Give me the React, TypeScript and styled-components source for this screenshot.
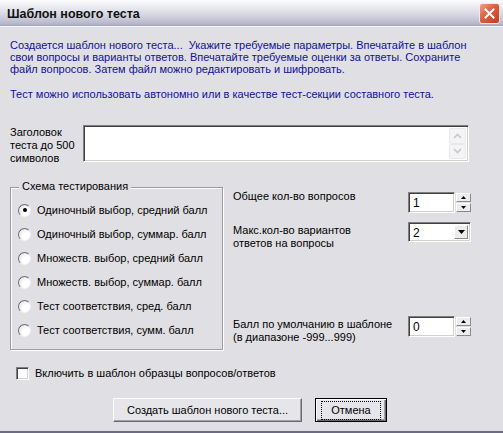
import * as React from 'react'
import styled, { createGlobalStyle } from 'styled-components'

const GlobalStyle = createGlobalStyle`
  html, body { margin: 0; padding: 0; background: #e0dfe3; }
  body { font-family: "Liberation Sans", Arial, sans-serif; font-size: 11px; color: #000; }
`

const Window = styled.div`
  width: 503px; height: 433px; display: flex; flex-direction: column; overflow: hidden;
`

const TitleBar = styled.div`
  height: 27px; flex: none; display: flex; align-items: center; justify-content: space-between;
  padding: 0 3px 0 7px; box-sizing: border-box;
  background: linear-gradient(#fdfdfe 0%, #ececf2 25%, #d4d4e0 60%, #b6b6ca 92%, #a2a2b8 100%);
  border-bottom: 1px solid #f4f4f8;
`

const Caption = styled.div`
  font: bold 12.5px "Liberation Sans", Arial, sans-serif; color: #111; padding-top: 2px;
`

const CloseBtn = styled.div`
  width: 21px; height: 21px; box-sizing: border-box; border-radius: 3px; border: 1px solid #f6e8e4;
  background: linear-gradient(135deg, #f0a28a 0%, #dc5e40 45%, #c43c22 100%);
  display: flex; align-items: center; justify-content: center;
`

const Body = styled.div`
  flex: 1; background: #e0dfe3; border-bottom: 2px solid #6c6b84; padding: 12px 0 0 10px;
  display: flex; flex-direction: column;
`

const Intro = styled.div`
  color: #10109c; line-height: 12px; white-space: nowrap;
`

const IntroPara = styled.p<{ gap?: number }>`
  margin: ${p => p.gap || 0}px 0 0 0;
`

const HeadingRow = styled.div`
  display: flex; margin-top: 25px;
`

const HeadingLabel = styled.div`
  width: 73px; line-height: 13px; margin-top: 1px;
`

const Sunken = styled.div`
  box-sizing: border-box; background: #fff;
  border: 1px solid; border-color: #7f7f7f #ffffff #ffffff #7f7f7f;
  box-shadow: inset 1px 1px 0 #404040, inset -1px -1px 0 #d4d0c8;
`

const TextBox = styled(Sunken)`
  width: 386px; height: 37px; display: flex; justify-content: flex-end; padding: 2px 2px;
`

const ScrollCol = styled.div`
  width: 17px; display: flex; flex-direction: column; gap: 0;
`

const ScrollBtn = styled.div`
  flex: 1; box-sizing: border-box; border: 1px solid #e8e8ec; border-radius: 2px;
  background: #f4f4f4; display: flex; align-items: center; justify-content: center;
`

const Middle = styled.div`
  display: flex; margin-top: 22px;
`

const Group = styled.div`
  position: relative; width: 213px; height: 163px; box-sizing: border-box;
  border: 1px solid #9d9da1; box-shadow: inset 1px 1px 0 #fff, 1px 1px 0 #fff;
  padding: 10px 0 0 7px;
`

const Legend = styled.span`
  position: absolute; top: -8px; left: 8px; padding: 0 3px; background: #e0dfe3; line-height: 13px;
`

const RadioRow = styled.label`
  display: flex; align-items: center; height: 24px; gap: 6px;
`

const RadioCircle = styled.span<{ checked?: boolean }>`
  width: 13px; height: 13px; box-sizing: border-box; border-radius: 50%; flex: none;
  border: 1px solid; border-color: #6e6e6e #f2f2f2 #f2f2f2 #6e6e6e;
  background: radial-gradient(circle at 65% 65%, #ffffff 35%, #d8d8dc 100%);
  display: flex; align-items: center; justify-content: center;
  &::after {
    content: ''; width: 4px; height: 4px; border-radius: 50%;
    background: ${p => (p.checked ? '#000' : 'transparent')};
  }
`

const Settings = styled.div`
  margin-left: 10px; display: flex; flex-direction: column;
`

const SettingRow = styled.div<{ top: number }>`
  display: flex; align-items: flex-start; margin-top: ${p => p.top}px;
`

const SettingLabel = styled.div<{ pad: number }>`
  width: 175px; line-height: 13px; padding-top: ${p => p.pad}px;
`

const Spin = styled.div<{ shift?: number }>`
  display: flex; margin-top: ${p => p.shift || 0}px;
`

const SpinInput = styled(Sunken)`
  width: 47px; height: 21px; padding: 3px 0 0 4px; font-size: 12px; line-height: 14px;
`

const SpinButtons = styled.div`
  width: 15px; margin-left: 1px; display: flex; flex-direction: column; gap: 1px; padding: 1px 0;
  box-sizing: border-box; height: 21px;
`

const SpinBtn = styled.div`
  flex: 1; box-sizing: border-box; background: #ececef;
  border: 1px solid; border-color: #fff #8a8a8a #8a8a8a #fff;
  display: flex; align-items: center; justify-content: center;
`

const Select = styled(Sunken)`
  width: 63px; height: 20px; display: flex; align-items: stretch; padding: 2px 2px 2px 4px;
  font-size: 12px;
`

const SelectValue = styled.div`
  flex: 1; line-height: 15px; padding-top: 1px;
`

const SelectBtn = styled.div`
  width: 14px; box-sizing: border-box; background: #ececef;
  border: 1px solid; border-color: #fff #8a8a8a #8a8a8a #fff;
  display: flex; align-items: center; justify-content: center;
`

const CheckRow = styled.label`
  display: flex; align-items: center; gap: 6px; margin: 16px 0 0 6px; height: 14px;
`

const CheckBox = styled(Sunken)`
  width: 13px; height: 13px;
`

const ButtonRow = styled.div`
  display: flex; gap: 13px; margin: 18px 0 0 103px;
`

const Button = styled.button<{ wide?: boolean; isDefault?: boolean }>`
  width: ${p => (p.wide ? 189 : 72)}px; height: 24px; box-sizing: border-box; padding: 0;
  font: 11px "Liberation Sans", Arial, sans-serif; color: #000; background: #e6e6ea;
  border: 1px solid ${p => (p.isDefault ? '#000' : '#f4f4f6')};
  border-color: ${p => (p.isDefault ? '#000' : '#fbfbfd #6a6a70 #6a6a70 #fbfbfd')};
  box-shadow: ${p =>
    p.isDefault
      ? 'inset 1px 1px 0 #fff, inset -1px -1px 0 #6a6a70, inset -2px -2px 0 #a0a0a8'
      : 'inset -1px -1px 0 #a0a0a8'};
  display: flex; align-items: center; justify-content: center;
`

const FocusRing = styled.span`
  border: 1px dotted #000; padding: 2px 9px; line-height: 13px;
`

const Arrow = ({ up, size = 3 }: { up?: boolean; size?: number }) => (
  <svg width={size * 2 + 1} height={size + 1} viewBox={`0 0 ${size * 2 + 1} ${size + 1}`}>
    <polygon
      points={up ? `0,${size + 1} ${size * 2 + 1},${size + 1} ${size + 0.5},0` : `0,0 ${size * 2 + 1},0 ${size + 0.5},${size + 1}`}
      fill="#000"
    />
  </svg>
)

const Chevron = ({ up }: { up?: boolean }) => (
  <svg width="9" height="6" viewBox="0 0 9 6">
    <polyline points={up ? '1,5 4.5,1.5 8,5' : '1,1 4.5,4.5 8,1'} fill="none" stroke="#c4c8cc" strokeWidth="1.6" />
  </svg>
)

const SpinBox = ({ value, shift }: { value: string; shift?: number }) => (
  <Spin shift={shift}>
    <SpinInput>{value}</SpinInput>
    <SpinButtons>
      <SpinBtn><Arrow up size={2} /></SpinBtn>
      <SpinBtn><Arrow size={2} /></SpinBtn>
    </SpinButtons>
  </Spin>
)

const schemes = [
  'Одиночный выбор, средний балл',
  'Одиночный выбор, суммар. балл',
  'Множеств. выбор, средний балл',
  'Множеств. выбор, суммар. балл',
  'Тест соответствия, сред. балл',
  'Тест соответствия, сумм. балл',
]

export default function App() {
  return (
    <Window>
      <GlobalStyle />
      <TitleBar>
        <Caption>Шаблон нового теста</Caption>
        <CloseBtn>
          <svg width="11" height="11" viewBox="0 0 11 11">
            <path d="M1.5 1.5 L9.5 9.5 M9.5 1.5 L1.5 9.5" stroke="#fff" strokeWidth="2" strokeLinecap="square" />
          </svg>
        </CloseBtn>
      </TitleBar>
      <Body>
        <Intro>
          <IntroPara>
            Создается шаблон нового теста...&nbsp; Укажите требуемые параметры. Впечатайте в шаблон<br />
            свои вопросы и варианты ответов. Впечатайте требуемые оценки за ответы. Сохраните<br />
            файл вопросов. Затем файл можно редактировать и шифровать.
          </IntroPara>
          <IntroPara gap={13}>Тест можно использовать автономно или в качестве тест-секции составного теста.</IntroPara>
        </Intro>

        <HeadingRow>
          <HeadingLabel>
            Заголовок<br />теста до 500<br />символов
          </HeadingLabel>
          <TextBox>
            <ScrollCol>
              <ScrollBtn><Chevron up /></ScrollBtn>
              <ScrollBtn><Chevron /></ScrollBtn>
            </ScrollCol>
          </TextBox>
        </HeadingRow>

        <Middle>
          <Group>
            <Legend>Схема тестирования</Legend>
            {schemes.map((s, i) => (
              <RadioRow key={s}>
                <RadioCircle checked={i === 0} />
                {s}
              </RadioRow>
            ))}
          </Group>
          <Settings>
            <SettingRow top={3}>
              <SettingLabel pad={0}>Общее кол-во вопросов</SettingLabel>
              <SpinBox value="1" shift={2} />
            </SettingRow>
            <SettingRow top={9}>
              <SettingLabel pad={2}>Макс.кол-во вариантов<br />ответов на вопросы</SettingLabel>
              <Select>
                <SelectValue>2</SelectValue>
                <SelectBtn><Arrow size={3} /></SelectBtn>
              </Select>
            </SettingRow>
            <SettingRow top={66}>
              <SettingLabel pad={2}>Балл по умолчанию в шаблоне<br />(в диапазоне -999...999)</SettingLabel>
              <SpinBox value="0" />
            </SettingRow>
          </Settings>
        </Middle>

        <CheckRow>
          <CheckBox />
          Включить в шаблон образцы вопросов/ответов
        </CheckRow>

        <ButtonRow>
          <Button wide>Создать шаблон нового теста...</Button>
          <Button isDefault><FocusRing>Отмена</FocusRing></Button>
        </ButtonRow>
      </Body>
    </Window>
  )
}
